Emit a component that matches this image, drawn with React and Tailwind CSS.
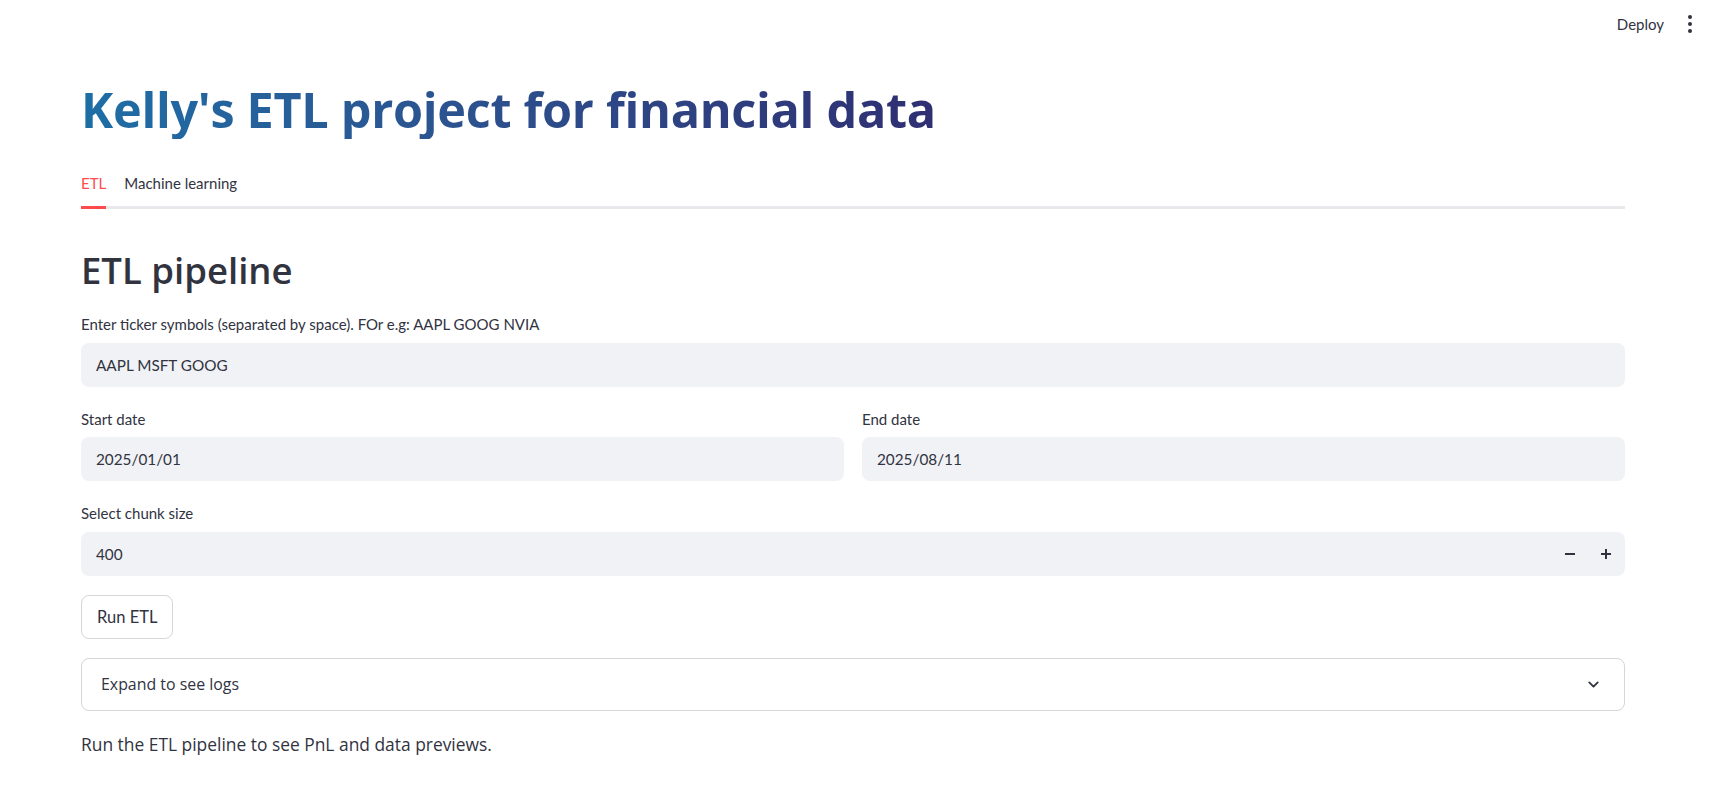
import React from "react";

function Chevron() {
  return (
    <svg width="17" height="17" viewBox="0 0 24 24" fill="none" stroke="#31333f" strokeWidth="2.6" strokeLinecap="round" strokeLinejoin="round">
      <path d="M6 9l6 6 6-6" />
    </svg>
  );
}

export default function App() {
  const lato = { fontFamily: "Lato, 'Noto Sans', sans-serif" };
  const open = { fontFamily: "'Open Sans', 'Noto Sans', sans-serif" };
  return (
    <div className="w-[1720px] h-[791px] bg-white text-[#31333f] overflow-hidden" style={lato}>
      <header className="h-[48px] flex items-center justify-end pr-[28px]">
        <span className="text-[15px] text-[#31333f]">Deploy</span>
        <span className="ml-[24px] flex flex-col items-center gap-[3px]">
          <span className="w-[4px] h-[4px] rounded-full bg-[#31333f]" />
          <span className="w-[4px] h-[4px] rounded-full bg-[#31333f]" />
          <span className="w-[4px] h-[4px] rounded-full bg-[#31333f]" />
        </span>
      </header>

      <main className="pl-[81px] pr-[95px]">
        <div className="mt-[32px] h-[64px] flex items-center">
          <h1 className="text-[48.6px] font-bold leading-none tracking-[-0.3px] bg-gradient-to-r from-[#1d6ea6] to-[#2e2f72] bg-clip-text text-transparent pb-[6px]" style={open}>
            Kelly's ETL project for financial data
          </h1>
        </div>

        <div className="mt-[20px]">
          <div className="flex gap-[18px] h-[42px] pb-[4px]">
            <div className="flex items-center text-[15px] text-[#ff4b4b]">ETL</div>
            <div className="flex items-center text-[15px] text-[#31333f]">Machine learning</div>
          </div>
          <div className="h-[3px] bg-[#e8e9ec] relative">
            <div className="absolute left-0 top-0 h-[3px] w-[25px] bg-[#ff4b4b]" />
          </div>
        </div>

        <div className="mt-[35px] h-[52px] flex items-center">
          <h2 className="text-[36.5px] font-semibold leading-none text-[#31333f]" style={open}>ETL pipeline</h2>
        </div>

        <div className="mt-[18px] h-[20px] flex items-center text-[15px]">
          Enter ticker symbols (separated by space). FOr e.g: AAPL GOOG NVIA
        </div>
        <div className="mt-[9px] h-[44px] rounded-[8px] bg-[#f0f2f6] flex items-center px-[15px] text-[15.3px]">
          AAPL MSFT GOOG
        </div>

        <div className="grid grid-cols-2 gap-[18px] mt-[22px]">
          <div>
            <div className="h-[20px] flex items-center text-[15px]">Start date</div>
            <div className="mt-[8px] h-[44px] rounded-[8px] bg-[#f0f2f6] flex items-center px-[15px] text-[15.3px]">
              2025/01/01
            </div>
          </div>
          <div>
            <div className="h-[20px] flex items-center text-[15px]">End date</div>
            <div className="mt-[8px] h-[44px] rounded-[8px] bg-[#f0f2f6] flex items-center px-[15px] text-[15.3px]">
              2025/08/11
            </div>
          </div>
        </div>

        <div className="mt-[22px] h-[20px] flex items-center text-[15px]">Select chunk size</div>
        <div className="mt-[9px] h-[44px] rounded-[8px] bg-[#f0f2f6] flex items-center pl-[15px] pr-[14px] text-[15.3px]">
          <span className="flex-1">400</span>
          <span className="flex items-center gap-[26px]">
            <svg width="10" height="10" viewBox="0 0 10 10"><rect x="0" y="4" width="10" height="2" fill="#31333f" /></svg>
            <svg width="10" height="10" viewBox="0 0 10 10"><rect x="0" y="4" width="10" height="2" fill="#31333f" /><rect x="4" y="0" width="2" height="10" fill="#31333f" /></svg>
          </span>
        </div>

        <button className="mt-[19px] h-[44px] px-[15px] rounded-[8px] border border-[#d5d6d9] bg-white text-[16.5px] text-[#31333f] flex items-center" style={lato}>
          Run ETL
        </button>

        <div className="mt-[19px] h-[53px] rounded-[8px] border border-[#d5d6d9] flex items-center pl-[19px] pr-[22px] text-[15.9px]" style={open}>
          <span className="flex-1">Expand to see logs</span>
          <Chevron />
        </div>

        <p className="mt-[21px] h-[24px] flex items-center text-[17.4px]" style={open}>
          Run the ETL pipeline to see PnL and data previews.
        </p>
      </main>
    </div>
  );
}
